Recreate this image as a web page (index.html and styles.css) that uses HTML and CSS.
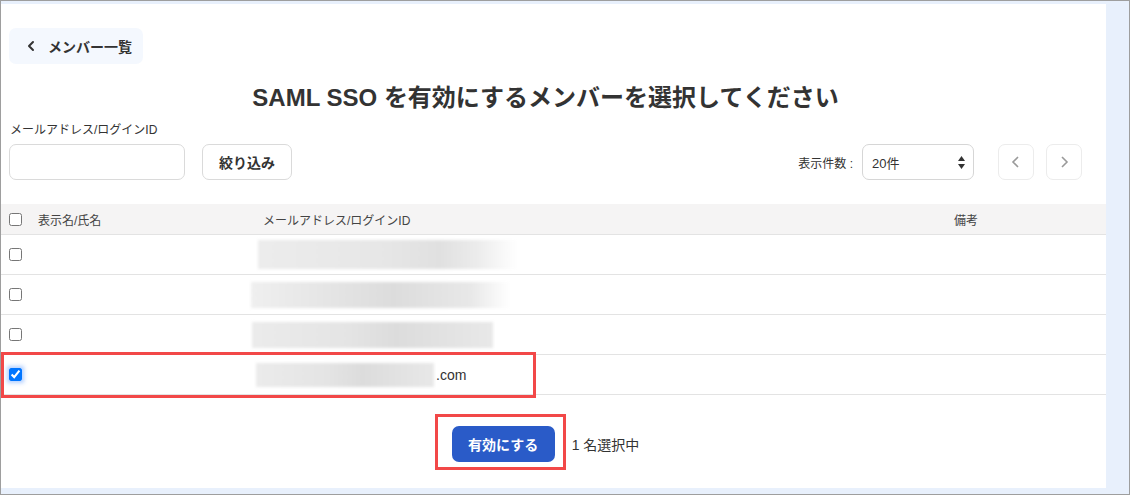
FILE: index.html
```html
<!DOCTYPE html>
<html lang="ja">
<head>
    <meta charset="UTF-8">
    <meta name="viewport" content="width=device-width, initial-scale=1.0">
    <title>SAML SSO メンバー選択</title>
    <link rel="stylesheet" href="styles.css">
</head>
<body>
    <div class="frame">
        <main class="panel">
            <a class="back-link" href="#">
                <svg width="12" height="14" viewBox="0 0 12 14"><path d="M8 3 L4 7 L8 11" fill="none" stroke="#333" stroke-width="2" stroke-linecap="round" stroke-linejoin="round"/></svg>
                <span>メンバー一覧</span>
            </a>

            <h1 class="title">SAML SSO を有効にするメンバーを選択してください</h1>

            <div class="toolbar">
                <div class="filter">
                    <label class="field-label" for="keyword">メールアドレス/ログインID</label>
                    <div class="filter-row">
                        <input class="text-input" id="keyword" type="text">
                        <button class="btn-outline">絞り込み</button>
                    </div>
                </div>
                <div class="paging">
                    <span class="per-page-label">表示件数 :</span>
                    <div class="select-box">
                        <span>20件</span>
                        <svg width="7" height="13" viewBox="0 0 7 13"><polygon points="0,5 3.5,0 7,5" fill="#333"/><polygon points="0,8 7,8 3.5,13" fill="#333"/></svg>
                    </div>
                    <div class="pager">
                        <button class="page-btn">
                            <svg width="10" height="14" viewBox="0 0 10 14"><path d="M7 2 L2 7 L7 12" fill="none" stroke="#9a9a9a" stroke-width="1.6"/></svg>
                        </button>
                        <button class="page-btn">
                            <svg width="10" height="14" viewBox="0 0 10 14"><path d="M3 2 L8 7 L3 12" fill="none" stroke="#9a9a9a" stroke-width="1.6"/></svg>
                        </button>
                    </div>
                </div>
            </div>

            <div class="member-table">
                <div class="table-row table-head">
                    <div class="cell cell-check"><input type="checkbox"></div>
                    <div class="cell">表示名/氏名</div>
                    <div class="cell">メールアドレス/ログインID</div>
                    <div class="cell">備考</div>
                </div>
                <div class="table-row">
                    <div class="cell cell-check"><input type="checkbox"></div>
                    <div class="cell"></div>
                    <div class="cell"><span class="mask mask-1"></span></div>
                    <div class="cell"></div>
                </div>
                <div class="table-row">
                    <div class="cell cell-check"><input type="checkbox"></div>
                    <div class="cell"></div>
                    <div class="cell"><span class="mask mask-2"></span></div>
                    <div class="cell"></div>
                </div>
                <div class="table-row">
                    <div class="cell cell-check"><input type="checkbox"></div>
                    <div class="cell"></div>
                    <div class="cell"><span class="mask mask-3"></span></div>
                    <div class="cell"></div>
                </div>
                <div class="table-row row-selected">
                    <div class="cell cell-check"><input class="check-focus" type="checkbox" checked></div>
                    <div class="cell"></div>
                    <div class="cell"><span class="mask mask-4"></span><span class="domain">.com</span></div>
                    <div class="cell"></div>
                    <span class="callout callout-row"></span>
                </div>
            </div>

            <div class="actions">
                <div class="submit-wrap">
                    <button class="btn-primary">有効にする</button>
                    <span class="callout callout-btn"></span>
                </div>
                <span class="selected-count">1 名選択中</span>
            </div>
        </main>
    </div>
</body>
</html>
```

FILE: styles.css
```css
* {
    box-sizing: border-box;
}
body {
    margin: 0;
    font-family: 'Liberation Sans', 'Noto Sans CJK JP', sans-serif;
    color: #333;
}
.frame {
    height: 495px;
    border: 1px solid #9e9e9e;
    background-color: #e8f0fc;
    padding: 3px 23px 6px 0;
}
.panel {
    height: 100%;
    background-color: #fff;
    padding: 24px 24px 0 8px;
}

/* back link */
.back-link {
    display: inline-flex;
    align-items: center;
    gap: 11px;
    height: 36px;
    width: 134px;
    padding-left: 16px;
    background-color: #f4f8fe;
    border-radius: 7px;
    color: #333;
    font-size: 14px;
    font-weight: 700;
    text-decoration: none;
}

.title {
    margin: 19px 0 0;
    font-size: 24px;
    line-height: 30px;
    font-weight: 700;
    text-align: center;
    color: #333;
}

/* filter + paging */
.toolbar {
    display: flex;
    justify-content: space-between;
    align-items: flex-end;
    margin-top: 9px;
}
.field-label {
    display: block;
    font-size: 12px;
    line-height: 16px;
    margin-left: 1px;
}
.filter-row {
    display: flex;
    gap: 17px;
    margin-top: 6px;
}
.text-input {
    width: 176px;
    height: 36px;
    border: 1px solid #dadada;
    border-radius: 7px;
    font: inherit;
}
.btn-outline {
    width: 90px;
    height: 36px;
    background: #fff;
    border: 1px solid #dadada;
    border-radius: 7px;
    font-family: inherit;
    font-size: 14px;
    font-weight: 700;
    color: #333;
}
.paging {
    display: flex;
    align-items: center;
}
.per-page-label {
    font-size: 12px;
    margin-right: 9px;
}
.select-box {
    display: flex;
    justify-content: space-between;
    align-items: center;
    width: 112px;
    height: 36px;
    padding: 0 8px 0 9px;
    border: 1px solid #d6d6d6;
    border-radius: 7px;
    font-size: 13px;
}
.pager {
    display: flex;
    gap: 12px;
    margin-left: 24px;
}
.page-btn {
    display: flex;
    align-items: center;
    justify-content: center;
    width: 36px;
    height: 36px;
    background: #fff;
    border: 1px solid #ececec;
    border-radius: 7px;
    padding: 0;
}

/* member table */
.member-table {
    margin: 24px -24px 0 -8px;
}
.table-row {
    position: relative;
    display: grid;
    grid-template-columns: 37px 225px 691px 1fr;
    align-items: center;
    height: 40px;
    border-bottom: 1px solid #e3e3e3;
    font-size: 12px;
}
.table-head {
    height: 31px;
    background-color: #f5f4f4;
    color: #444;
}
.cell {
    display: flex;
    align-items: center;
}
.cell-check {
    padding-left: 8px;
}
.cell-check input {
    width: 13px;
    height: 13px;
    margin: 0;
}
.check-focus {
    box-shadow: 0 0 4px 2px rgba(40, 120, 255, 0.35);
    border-radius: 2px;
}
.mask {
    display: block;
    background: linear-gradient(90deg, #ebebeb, #e4e4e4 40%, #dcdcdc 60%, #e8e8e8);
    filter: blur(1.5px);
}
.mask-1 {
    width: 259px;
    height: 29px;
    margin-left: -5px;
    background: linear-gradient(90deg, #ececec, #e6e6e6 50%, #e0e0e0 70%, #ececec 85%, #fff);
}
.mask-2 {
    width: 259px;
    height: 26px;
    margin-left: -12px;
    background: linear-gradient(90deg, #efefef, #e3e3e3 35%, #dcdcdc 55%, #e8e8e8 85%, #fff);
}
.mask-3 {
    width: 241px;
    height: 26px;
    margin-left: -11px;
}
.mask-4 {
    width: 178px;
    height: 24px;
    margin-left: -7px;
}
.domain {
    font-size: 14px;
    margin-left: 2px;
}

/* red annotation frames */
.callout {
    position: absolute;
    border: 3px solid #f24848;
    pointer-events: none;
}
.callout-row {
    left: 0;
    top: -3px;
    width: 535px;
    height: 46px;
}

/* bottom actions */
.actions {
    display: flex;
    justify-content: center;
    align-items: center;
    gap: 17px;
    margin-top: 31px;
}
.submit-wrap {
    position: relative;
}
.btn-primary {
    display: block;
    width: 103px;
    height: 36px;
    background-color: #2a5bc8;
    border: none;
    border-radius: 7px;
    color: #fff;
    font-family: inherit;
    font-size: 14px;
    font-weight: 700;
}
.callout-btn {
    left: -17px;
    top: -12px;
    width: 131px;
    height: 56px;
}
.selected-count {
    font-size: 14px;
}
```
